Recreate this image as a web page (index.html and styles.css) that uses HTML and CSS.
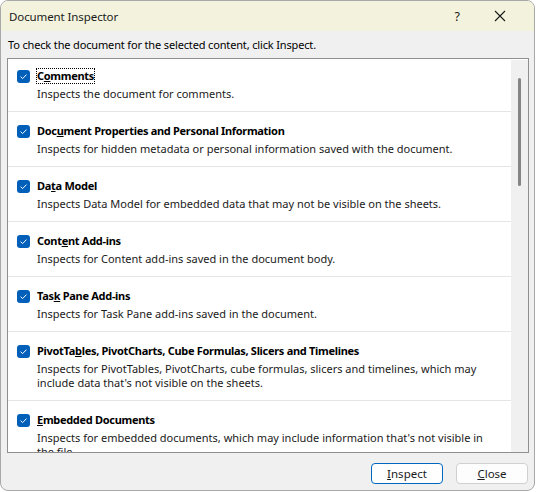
FILE: index.html
```html
<!DOCTYPE html>
<html>
<head>
<meta charset="utf-8">
<link rel="stylesheet" href="styles.css">
</head>
<body>
<div class="window">
  <div class="titlebar">
    <span class="title">Document Inspector</span>
    <span class="help">?</span>
    <svg class="close-x" width="12" height="12" viewBox="0 0 12 12"><path d="M1 1 L11 11 M11 1 L1 11" stroke="#1a1a1a" stroke-width="1.1" fill="none"/></svg>
  </div>
  <div class="body">
    <div class="intro">To check the document for the selected content, click Inspect.</div>
    <div class="list">
      <div class="items">
        <div class="item first">
          <div class="head"><svg class="cb" width="13" height="13" viewBox="0 0 13 13"><rect width="13" height="13" rx="3" fill="#005fb8"/><path d="M3.6 6.7 L5.6 8.6 L9.5 4.6" stroke="#fff" stroke-width="1" fill="none"/></svg><span class="name focus">C<u>o</u>mments</span></div>
          <div class="desc">Inspects the document for comments.</div>
        </div>
        <div class="item">
          <div class="head"><svg class="cb" width="13" height="13" viewBox="0 0 13 13"><rect width="13" height="13" rx="3" fill="#005fb8"/><path d="M3.6 6.7 L5.6 8.6 L9.5 4.6" stroke="#fff" stroke-width="1" fill="none"/></svg><span class="name">Doc<u>u</u>ment Properties and Personal Information</span></div>
          <div class="desc">Inspects for hidden metadata or personal information saved with the document.</div>
        </div>
        <div class="item">
          <div class="head"><svg class="cb" width="13" height="13" viewBox="0 0 13 13"><rect width="13" height="13" rx="3" fill="#005fb8"/><path d="M3.6 6.7 L5.6 8.6 L9.5 4.6" stroke="#fff" stroke-width="1" fill="none"/></svg><span class="name">Da<u>t</u>a Model</span></div>
          <div class="desc">Inspects Data Model for embedded data that may not be visible on the sheets.</div>
        </div>
        <div class="item">
          <div class="head"><svg class="cb" width="13" height="13" viewBox="0 0 13 13"><rect width="13" height="13" rx="3" fill="#005fb8"/><path d="M3.6 6.7 L5.6 8.6 L9.5 4.6" stroke="#fff" stroke-width="1" fill="none"/></svg><span class="name">Cont<u>e</u>nt Add-ins</span></div>
          <div class="desc">Inspects for Content add-ins saved in the document body.</div>
        </div>
        <div class="item">
          <div class="head"><svg class="cb" width="13" height="13" viewBox="0 0 13 13"><rect width="13" height="13" rx="3" fill="#005fb8"/><path d="M3.6 6.7 L5.6 8.6 L9.5 4.6" stroke="#fff" stroke-width="1" fill="none"/></svg><span class="name">Tas<u>k</u> Pane Add-ins</span></div>
          <div class="desc">Inspects for Task Pane add-ins saved in the document.</div>
        </div>
        <div class="item">
          <div class="head"><svg class="cb" width="13" height="13" viewBox="0 0 13 13"><rect width="13" height="13" rx="3" fill="#005fb8"/><path d="M3.6 6.7 L5.6 8.6 L9.5 4.6" stroke="#fff" stroke-width="1" fill="none"/></svg><span class="name">PivotTa<u>b</u>les, PivotCharts, Cube Formulas, Slicers and Timelines</span></div>
          <div class="desc">Inspects for PivotTables, PivotCharts, cube formulas, slicers and timelines, which may<br>include data that's not visible on the sheets.</div>
        </div>
        <div class="item">
          <div class="head"><svg class="cb" width="13" height="13" viewBox="0 0 13 13"><rect width="13" height="13" rx="3" fill="#005fb8"/><path d="M3.6 6.7 L5.6 8.6 L9.5 4.6" stroke="#fff" stroke-width="1" fill="none"/></svg><span class="name"><u>E</u>mbedded Documents</span></div>
          <div class="desc">Inspects for embedded documents, which may include information that's not visible in<br>the file.</div>
        </div>
      </div>
      <div class="scrollbar"><div class="thumb"></div></div>
    </div>
    <div class="footer">
      <button class="btn primary"><u>I</u>nspect</button>
      <button class="btn"><u>C</u>lose</button>
    </div>
  </div>
</div>
</body>
</html>
```

FILE: styles.css
```css
html, body {
  margin: 0;
  padding: 0;
  background: #ffffff;
}
body {
  font-family: "Noto Sans", "Open Sans", sans-serif;
  font-size: 11px;
  color: #1a1a1a;
}
.window {
  width: 535px;
  height: 491px;
  box-sizing: border-box;
  border: 1px solid #a8a8a8;
  border-radius: 8px;
  overflow: hidden;
  background: #f0f0f0;
  display: flex;
  flex-direction: column;
}
.titlebar {
  height: 30px;
  flex: none;
  background: #f3f3dd;
  display: flex;
  align-items: center;
  padding-left: 8px;
}
.title {
  flex: 1;
  color: #1a1a1a;
  font-size: 11.5px;
  letter-spacing: -0.1px;
}
.help {
  font-size: 12.5px;
  color: #1a1a1a;
  margin-right: 34px;
}
.close-x {
  margin-right: 28px;
}
.body {
  flex: 1;
  display: flex;
  flex-direction: column;
  padding: 0 5px 0 6px;
}
.intro {
  height: 27px;
  line-height: 27px;
  padding-left: 1px;
  color: #000;
  letter-spacing: -0.15px;
}
.list {
  height: 395px;
  box-sizing: border-box;
  border: 1px solid #8f8f8f;
  background: #fff;
  display: flex;
}
.items {
  flex: 1;
  overflow: hidden;
}
.item {
  padding: 12px 0 10px 9px;
  border-bottom: 1px solid #e5e5e5;
}
.item.first {
  padding-top: 10px;
  padding-bottom: 10px;
}
.head {
  display: flex;
  align-items: center;
  height: 14px;
}
.cb {
  flex: none;
  margin-right: 7px;
}
.name {
  font-weight: bold;
  color: #000;
  line-height: 14px;
  letter-spacing: -0.3px;
}
.name.focus {
  outline: 1px dotted #000;
  outline-offset: 0px;
}
.desc {
  margin-top: 4px;
  padding-left: 20px;
  line-height: 14px;
  color: #1a1a1a;
}
.scrollbar {
  width: 17px;
  flex: none;
  background: #f0f0f0;
  position: relative;
  margin-top: 1px;
}
.thumb {
  position: absolute;
  left: 7px;
  top: 18px;
  width: 3px;
  height: 108px;
  border-radius: 2px;
  background: #858585;
}
.footer {
  display: flex;
  justify-content: flex-end;
  gap: 13px;
  padding-top: 10px;
  padding-right: 1px;
}
.btn {
  width: 72px;
  height: 21px;
  box-sizing: border-box;
  border: 1px solid #d0d0d0;
  border-radius: 4px;
  background: #fdfdfd;
  font-family: "Noto Sans", "Open Sans", sans-serif;
  font-size: 11.5px;
  color: #1a1a1a;
  padding: 0;
}
.btn.primary {
  border-color: #0067c0;
  background: #fefefe;
}
```
